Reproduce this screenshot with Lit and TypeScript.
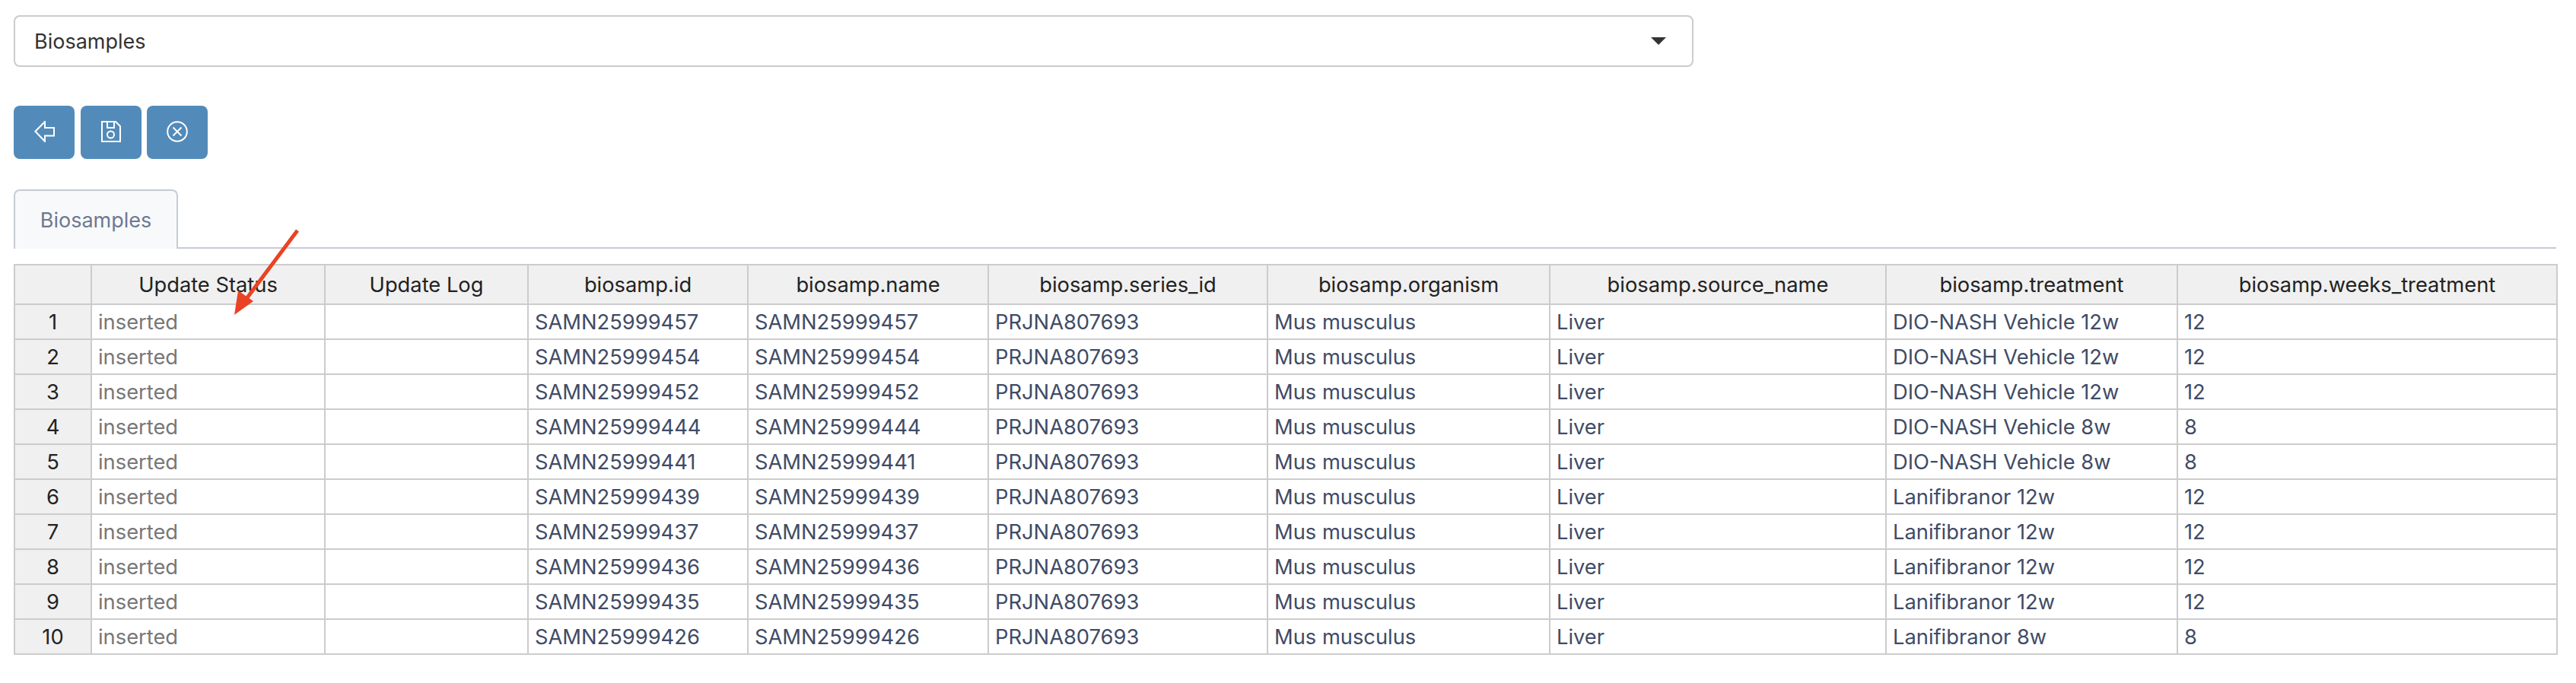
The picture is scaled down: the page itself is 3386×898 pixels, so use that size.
import { LitElement, html, css, svg } from "lit";
import { customElement } from "lit/decorators.js";

const IDS = ["SAMN25999457","SAMN25999454","SAMN25999452","SAMN25999444","SAMN25999441","SAMN25999439","SAMN25999437","SAMN25999436","SAMN25999435","SAMN25999426"];
const TREAT = ["DIO-NASH Vehicle 12w","DIO-NASH Vehicle 12w","DIO-NASH Vehicle 12w","DIO-NASH Vehicle 8w","DIO-NASH Vehicle 8w","Lanifibranor 12w","Lanifibranor 12w","Lanifibranor 12w","Lanifibranor 12w","Lanifibranor 8w"];
const WEEKS = ["12","12","12","8","8","12","12","12","12","8"];
const COLS = [101,307,267,289,316,367,371,442,383,499];
const HEADS = ["","Update Status","Update Log","biosamp.id","biosamp.name","biosamp.series_id","biosamp.organism","biosamp.source_name","biosamp.treatment","biosamp.weeks_treatment"];

@customElement("app-root")
export class AppRoot extends LitElement {
  static styles = css`
    :host { display: block; position: relative; width: 3386px; height: 898px; box-sizing: border-box; padding: 20px 0 0 18px; font-family: Inter, "Liberation Sans", sans-serif; background: #fff; overflow: hidden; }
    .select { width: 2208px; height: 68px; box-sizing: border-box; border: 2px solid #ccc; border-radius: 8px; display: flex; align-items: center; justify-content: space-between; padding: 0 34px 0 25px; font-size: 27px; color: #333; }
    .caret { width: 0; height: 0; border-left: 10px solid transparent; border-right: 10px solid transparent; border-top: 10px solid #333; }
    .buttons { display: flex; margin-top: 51px; gap: 8px; }
    .btn { width: 80px; height: 70px; background: #528bba; border-radius: 8px; display: flex; align-items: center; justify-content: center; padding-bottom: 3px; box-sizing: border-box; }
    .btn + .btn + .btn { margin-left: -1px; }
    .btn svg { display: block; fill: none; stroke: #fff; stroke-width: 2; }
    .tabbar { width: 3342px; margin-top: 40px; height: 78px; box-sizing: border-box; border-bottom: 2px solid #c6cbd3; display: flex; }
    .tab { width: 216px; height: 78px; box-sizing: border-box; border: 2px solid #c6cbd3; border-bottom: 0; border-radius: 8px 8px 0 0; background: #f8f9fa; color: #6c7a91; font-size: 27px; display: flex; align-items: center; justify-content: center; }
    table { margin-top: 20px; border-collapse: collapse; table-layout: fixed; width: 3342px; font-size: 27.3px; }
    th, td { border: 2px solid #ccc; padding: 0 8px; overflow: hidden; white-space: nowrap; }
    th { height: 50px; background: #f0f0f0; color: #222; font-weight: 400; text-align: center; }
    td { height: 44px; color: #3f4b66; text-align: left; }
    td.num { background: #f0f0f0; color: #222; text-align: center; }
    td.status { color: #777; }
    .arrow { position: absolute; left: 292px; top: 295px; pointer-events: none; }
  `;

  private icons = [
    svg`<path d="M1.4 13.7 14 1V9H26V19.6H14V27Z"/>`,
    svg`<path d="M1 1H19L25 7V27H1Z"/><path d="M8 1V9H17V1"/><circle cx="12.5" cy="18" r="4.5"/>`,
    svg`<circle cx="14" cy="14" r="12.8"/><path d="M8.5 8.5 19.5 19.5M19.5 8.5 8.5 19.5"/>`,
  ];

  render() {
    const sizes = [[27, 28], [26, 28], [28, 28]];
    return html`
      <div class="select"><span>Biosamples</span><span class="caret"></span></div>
      <div class="buttons">
        ${this.icons.map((ic, i) => html`<div class="btn"><svg width=${sizes[i][0]} height=${sizes[i][1]} viewBox="0 0 ${sizes[i][0]} ${sizes[i][1]}">${ic}</svg></div>`)}
      </div>
      <div class="tabbar"><div class="tab">Biosamples</div></div>
      <table>
        <colgroup>${COLS.map((w) => html`<col style="width:${w}px" />`)}</colgroup>
        <thead><tr>${HEADS.map((h) => html`<th>${h}</th>`)}</tr></thead>
        <tbody>
          ${IDS.map((id, i) => html`<tr>
            <td class="num">${i + 1}</td>
            <td class="status">inserted</td>
            <td></td>
            <td>${id}</td>
            <td>${id}</td>
            <td>PRJNA807693</td>
            <td>Mus musculus</td>
            <td>Liver</td>
            <td>${TREAT[i]}</td>
            <td>${WEEKS[i]}</td>
          </tr>`)}
        </tbody>
      </table>
      <svg class="arrow" width="110" height="130" viewBox="0 0 110 130">
        <path d="M99 8 28 103" stroke="#ea4224" stroke-width="5" fill="none"/>
        <path d="M16 119 21 87 41 101Z" fill="#ea4224"/>
      </svg>
    `;
  }
}
